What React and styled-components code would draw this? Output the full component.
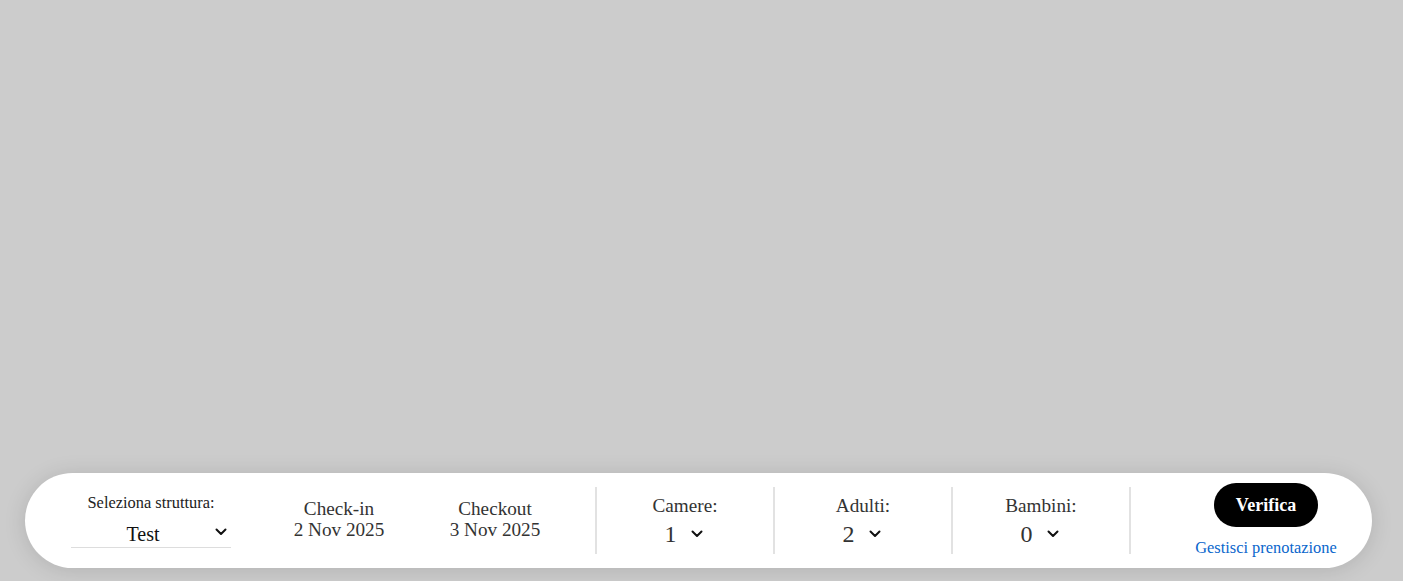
import React from "react";
import styled, { createGlobalStyle } from "styled-components";

const GlobalStyle = createGlobalStyle`
  html, body { margin: 0; padding: 0; }
  body {
    background: #cccccc;
    font-family: "Liberation Serif", "Times New Roman", serif;
    color: #333;
  }
`;

const Page = styled.div`
  min-height: 100vh;
  box-sizing: border-box;
  display: flex;
  flex-direction: column;
  justify-content: flex-end;
  padding: 0 0 13px 25px;
`;

const Bar = styled.form`
  width: 1347px;
  height: 95px;
  box-sizing: border-box;
  background: #fff;
  border-radius: 48px;
  box-shadow: 0 2px 22px rgba(0, 0, 0, 0.13);
  display: flex;
  align-items: center;
  padding-left: 46px;
`;

const SelectBlock = styled.div`
  width: 160px;
  display: flex;
  flex-direction: column;
  align-items: stretch;
`;

const SmallLabel = styled.div`
  font-size: 16.4px;
  line-height: 19px;
  text-align: center;
  color: #222;
  white-space: nowrap;
`;

const SelectBox = styled.div`
  height: 36px;
  display: flex;
  align-items: center;
  border-bottom: 1px solid #dddddd;
  padding-right: 4px;
  padding-top: 10px;
  box-sizing: border-box;
  cursor: pointer;
`;

const SelectValue = styled.span`
  flex: 1;
  text-align: center;
  font-family: "Liberation Serif", "Times New Roman", serif;
  font-size: 20px;
  color: #111;
`;

const SelectChevron = styled.span`
  display: flex;
  margin-top: -6px;
`;

const DateBlock = styled.div`
  width: 156px;
  margin-left: ${(p) => p.$ml || 0}px;
  margin-bottom: 4px;
  text-align: center;
  font-size: 19.2px;
  line-height: 21px;
  color: #333;
  cursor: pointer;
`;

const CountColumn = styled.div`
  width: 178px;
  height: 67px;
  box-sizing: border-box;
  padding-top: 2px;
  margin-left: ${(p) => p.$ml || 0}px;
  border-left: 2px solid #e2e2e2;
  display: flex;
  flex-direction: column;
  align-items: center;
  justify-content: center;
`;

const CountLabel = styled.div`
  font-size: 19.2px;
  line-height: 21px;
  color: #333;
`;

const CountValue = styled.div`
  display: flex;
  align-items: center;
  gap: 14px;
  margin-top: 3px;
  margin-left: -3px;
  font-size: 24px;
  line-height: 30px;
  color: #333;
  cursor: pointer;
`;

const ActionColumn = styled.div`
  height: 67px;
  border-left: 2px solid #e2e2e2;
  padding-left: 55px;
  display: flex;
  align-items: center;
`;

const ActionInner = styled.div`
  width: 160px;
  display: flex;
  flex-direction: column;
  align-items: center;
  gap: 12px;
  margin-bottom: 1px;
`;

const VerifyButton = styled.button`
  height: 44px;
  padding: 0 22px;
  border: none;
  border-radius: 22px;
  background: #000;
  color: #fff;
  font-family: "Liberation Serif", "Times New Roman", serif;
  font-weight: bold;
  font-size: 18px;
  cursor: pointer;
`;

const ManageLink = styled.a`
  font-size: 16.4px;
  line-height: 18px;
  color: #0a66cc;
  text-decoration: none;
  white-space: nowrap;
  cursor: pointer;
`;

const Chevron = () => (
  <svg width="12" height="8" viewBox="0 0 12 8" fill="none">
    <path d="M1.5 1.5 L6 6 L10.5 1.5" stroke="#111" strokeWidth="2" strokeLinecap="round" strokeLinejoin="round" />
  </svg>
);

const counts = [
  { label: "Camere:", value: 1 },
  { label: "Adulti:", value: 2 },
  { label: "Bambini:", value: 0 },
];

export default function App() {
  return (
    <>
      <GlobalStyle />
      <Page>
        <Bar onSubmit={(e) => e.preventDefault()}>
          <SelectBlock>
            <SmallLabel>Seleziona struttura:</SmallLabel>
            <SelectBox>
              <SelectValue>Test</SelectValue>
              <SelectChevron>
                <Chevron />
              </SelectChevron>
            </SelectBox>
          </SelectBlock>
          <DateBlock $ml={30}>
            Check-in
            <br />2 Nov 2025
          </DateBlock>
          <DateBlock>
            Checkout
            <br />3 Nov 2025
          </DateBlock>
          {counts.map((c, i) => (
            <CountColumn key={c.label} $ml={i === 0 ? 22 : 0}>
              <CountLabel>{c.label}</CountLabel>
              <CountValue>
                <span>{c.value}</span>
                <Chevron />
              </CountValue>
            </CountColumn>
          ))}
          <ActionColumn>
            <ActionInner>
              <VerifyButton type="submit">Verifica</VerifyButton>
              <ManageLink href="#">Gestisci prenotazione</ManageLink>
            </ActionInner>
          </ActionColumn>
        </Bar>
      </Page>
    </>
  );
}
